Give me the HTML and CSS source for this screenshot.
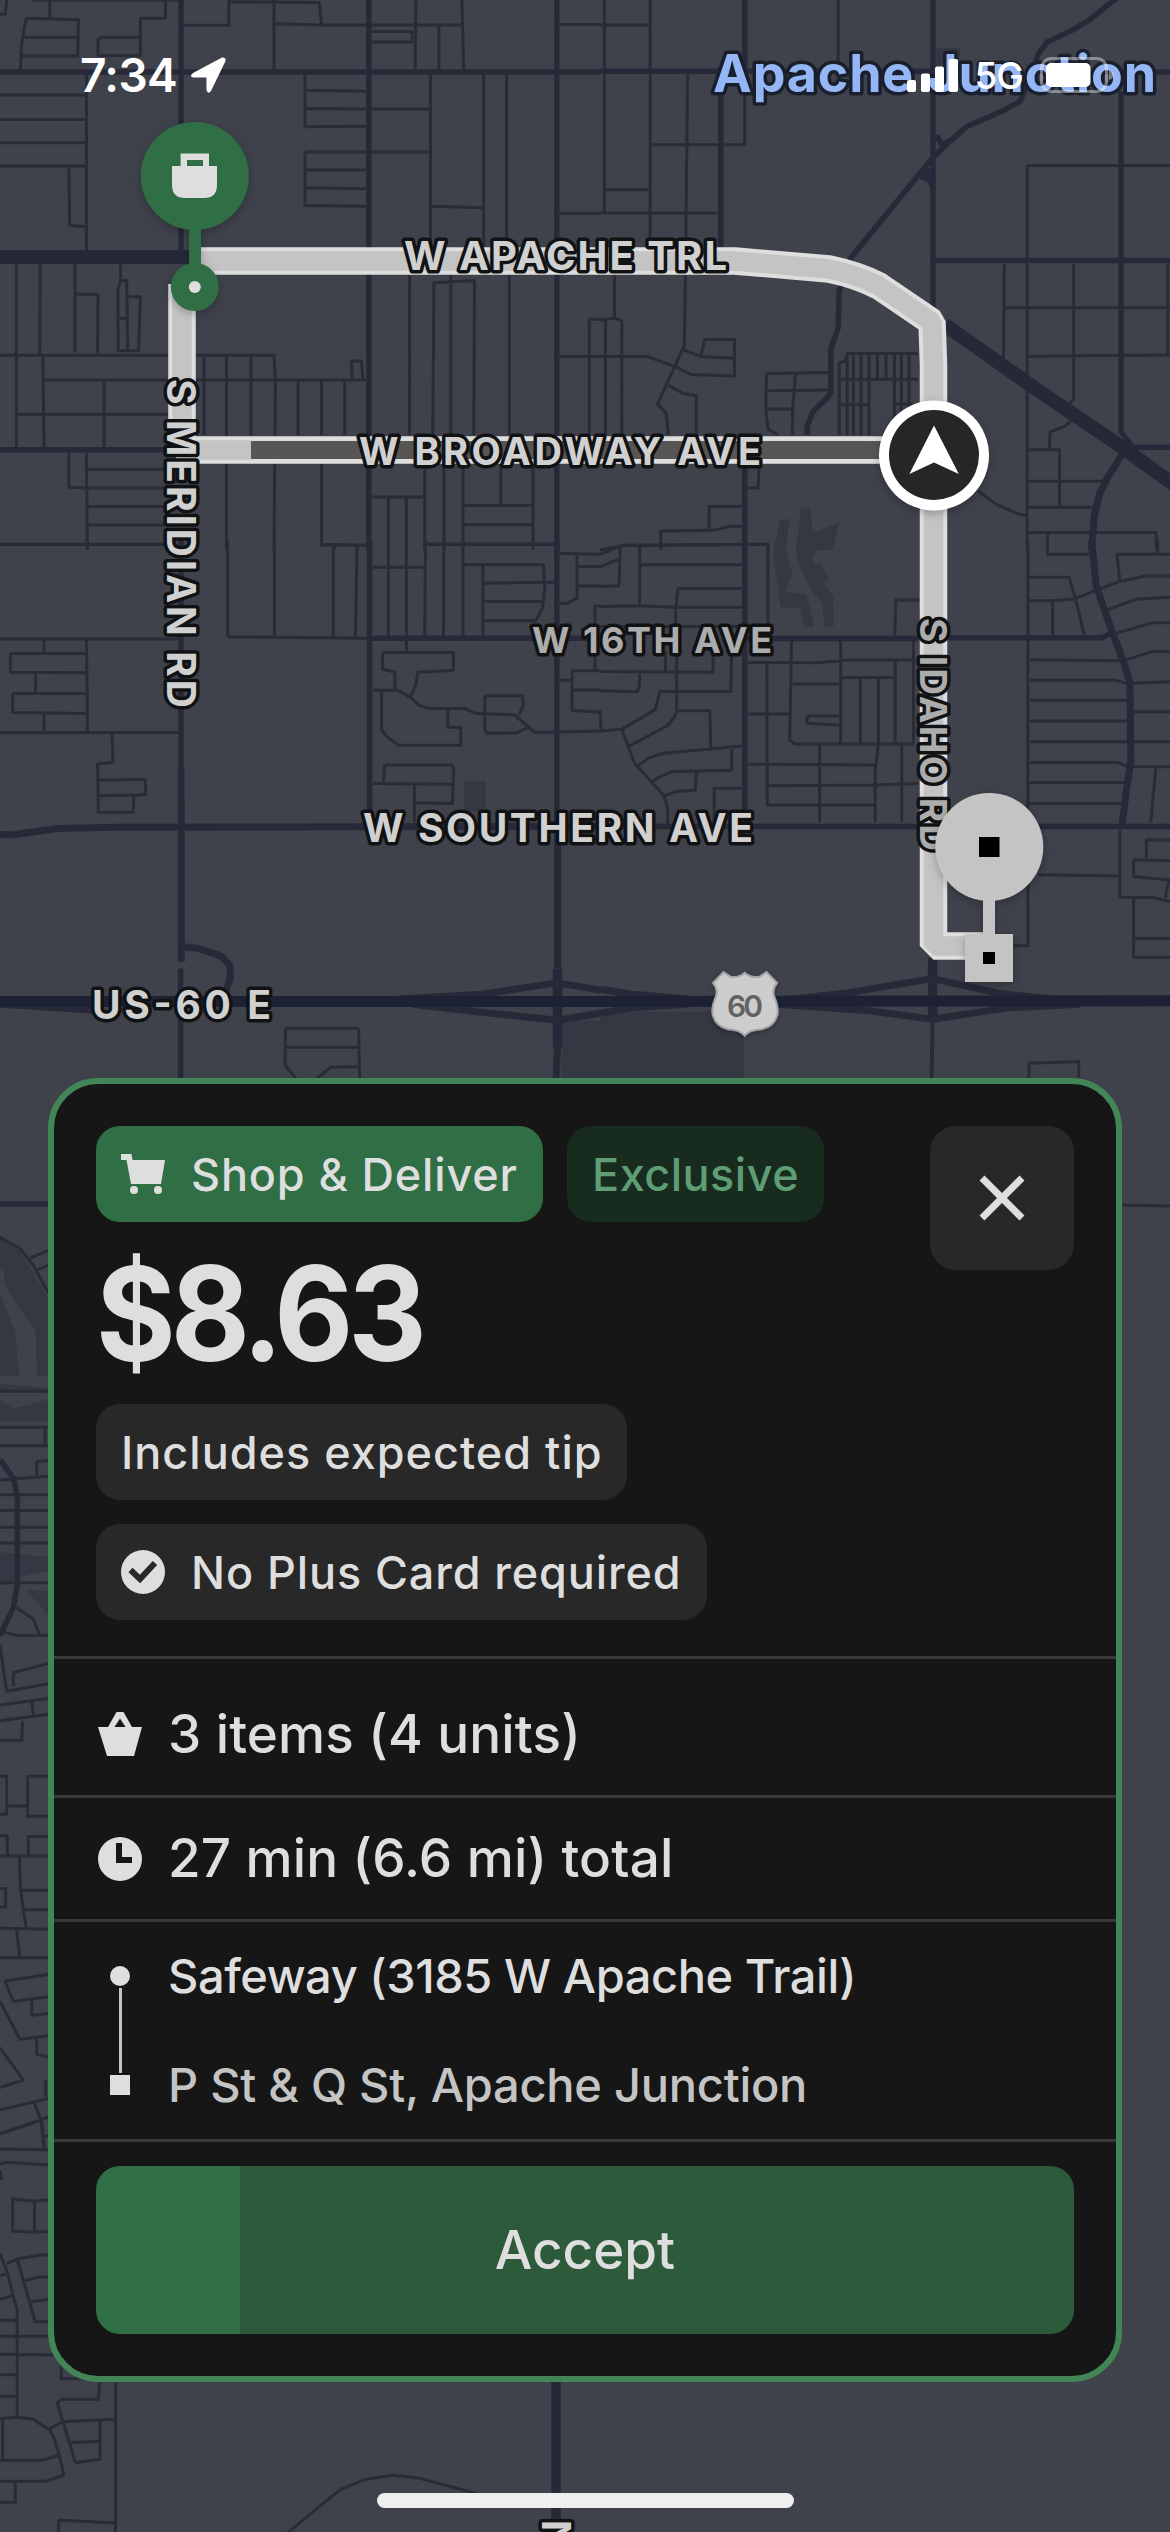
FILE: index.html
```html
<!DOCTYPE html>
<html lang="en">
<head>
<meta charset="utf-8">
<title>Delivery offer</title>
<link rel="stylesheet" href="styles.css">
</head>
<body>
<div class="screen">
<svg class="map" viewBox="0 0 1170 2532" aria-hidden="true">
  <!-- north west -->
  <g transform="scale(.38265 .35077)">
    <path class="minor" d="M0 40H14L18 0M130 0V50M85 0H470M68 52L205 56L203 160H58M68 52L56 130L53 200M65 106H205M480 72H598V0M598 5L835 7L840 68M433 0L432 52H367V158H256V112L265 106H367M716 0V200M720 68L840 71H1207M1087 0L1085 200M972 90H1077V120H972M1147 70V200M1207 0L1212 200M1463 70H1568M0 271H226M0 341H226M0 407H226M0 473H226M226 213V712M180 475L182 643L222 646M797 213V361L957 360M797 257L957 260M797 309L957 311H1125M797 433H1125M797 433V586L957 588M797 485H957M797 535L957 538M1125 213V705M1125 588L1262 592M1264 213V705M1324 213V705M1463 608H1568M43 752V1275M105 752L104 1008M196 752V1006M198 839H256L255 1006M315 752V800L308 828L309 1000H362L367 846H336M315 800H331L334 1000M311 907H330M0 1013H716L720 1085M112 1013L115 1275M115 1083H957M46 1181H440M272 1085V1275M533 1015V1240M592 1015V1568M656 1015V1240M720 1085L716 1568M779 1088V1240M840 1085V1240M901 1088V1240M921 1080L918 1029H945L948 1080M1070 785V1240M1131 1240L1134 806L1240 800L1238 1240M1178 785V1240M1331 785V1240M1463 1016H1568M1568 910H1540V1240M180 1290V1389L226 1391M226 1290L228 1568M230 1338H440M230 1391H440M230 1444H440M230 1497H440M0 1552H440M840 1322V1552L957 1555M874 1555V1568M934 1555V1568M972 1417H1110M1110 1322V1568M1015 1420V1568M1062 1420V1568M1160 1322V1568M1210 1322V1550M1212 1441H1393M1309 1322V1441M1393 1322V1568M1212 1496H1393M1118 1552H1450"/>
    <path class="mid" d="M473 0V715M964 0V1568M1455 0V1568M0 205H1568M0 1282H440"/>
    <path class="major" d="M0 733H500"/>
  </g>
  <!-- north east -->
  <g transform="translate(600) scale(.36352 .35077)">
    <path class="area" d="M925 137H990V200H925ZM495 1480H522L510 1568H480ZM553 1450H578L587 1518L657 1490L640 1568H540Z"/>
    <path class="minor" d="M12 0V605M0 71H138M138 0V705M0 607H322M15 541H138M138 413H398V212M241 212L236 705M655 0V200M1175 472H1568M1175 472V1568M1112 752L1110 1020M1303 752V1137L1285 1160M1110 877H1568M1177 1016L1300 1014L1568 1012M1562 752V1012M1300 1195L1280 1215L1238 1232L1236 1278M1178 1282H1264V1446M1178 1372H1385M1178 1446H1360M1040 1400L1090 1438L1150 1465L1175 1470M1178 1518H1530V1568M1231 1520V1568M40 785V907L60 915V1240M0 912L40 907M15 912V1240M0 1016H130L208 1046L252 1068L370 1072V968H288L277 1016L370 1021M235 785L232 985L158 1152L182 1177L188 1240M228 997L277 1016M188 1098L228 1121L265 1128V1240M458 1065L630 1062M458 1065L456 1170L463 1225L490 1240M460 1114L630 1112M538 1065L530 1165L529 1240M458 1166H530M658 1240V1034L675 1029L680 1008H875M680 1008V1240M697 1008V1240M718 1008V1240M740 1008V1240M763 1008V1080M787 1008V1080M810 1008V1240M829 1008V1200M850 1008V1200M658 1081H875M658 1154H740M812 1152H860M438 1322L435 1391H407M390 1444H300V1508M167 1568V1514L310 1512L360 1500H390M0 1568L65 1555L462 1552V1568M109 1556V1568"/>
    <path class="mid" d="M398 0V200M0 203H910M332 212V705M916 0V880M1433 260V1230L1465 1275H1568M916 743H1568M398 1322V1568M1350 205H1568"/>
    <path class="mid" d="M1420 -5L1345 58L1295 88L1230 120L1205 155L1185 215L1155 290L1100 320L1010 360L960 405L915 450L820 570L690 735L658 830L655 935L635 995V1120L622 1137L585 1175L570 1215V1240M925 385L940 412L965 400M900 480V500L885 505L905 512L914 530"/>
    <path class="major" d="M948 925L1180 1095L1450 1285L1590 1390"/>
    <path class="wide" d="M1440 1290L1400 1355L1375 1405L1360 1470L1352 1568"/>
  </g>
  <!-- south west -->
  <g transform="translate(0 540) scale(.38265 .35714)">
    <path class="area" d="M1213 675H1270V760H1213ZM1468 1345H1568V1520H1468Z"/>
    <path class="minor" d="M0 12H430M228 0V12M595 0V271M717 0V271M595 271L960 275M840 0V14H957M871 15V270M933 15L929 270M1015 0V270M1062 0V310M1112 0L1110 270M1160 0L1159 270M1210 0V270M975 76H1110M1112 11H1450M1393 0V11M1213 69H1420L1424 130L1418 190L1400 226H1262M1262 70V270M1265 121L1450 118M1265 172H1420M1463 38L1568 40M1508 38V162L1480 178H1463M1510 74H1568M1510 129H1568M1568 185H1555V370M0 277H470M27 318H225M27 318V370L225 372M115 280V316M226 280L229 540M93 372V428M33 430H225M33 430V483L225 486M115 486V540M0 540L470 539M293 541L295 622L255 627L257 762H348L350 716L381 712L379 670L257 673M257 716L350 714M1000 315H1185V365L1092 370L1087 405L1072 440M1000 315V362L1032 370V420M975 421H1040L1072 440L1095 463L1125 472H1215L1245 486L1345 490L1398 539L1568 535M997 421V530L1010 550L1042 575H1204V524H1170V472M1268 436H1365L1368 460L1357 490M1267 436V530L1272 541L1350 540L1382 524M1005 630H1180L1186 640L1182 738L1085 736M1005 630L1002 682M975 682L1185 684M1083 684V790M1463 393H1495M1568 366H1495V477L1568 482M1497 420H1568M746 1367H937M746 1367L745 1470L775 1510M937 1367L940 1510M746 1420H937M825 1510L865 1476L937 1474"/>
    <path class="mid" d="M473 0V790M966 0V790M1455 0V780M960 275H1568M472 1200V1510"/>
    <path class="wide" d="M0 824L30 826L150 808L300 804L1568 802M473 640L474 1180M1457 780V1120M475 1138L520 1144L578 1165L600 1190L603 1222L590 1265"/>
    <path class="major thin" d="M1457 1200V1420"/>
    <path class="wide" d="M1457 1110V1200M1457 1420L1453 1510M1040 1285L1260 1272L1455 1240L1568 1260M1080 1300L1240 1320L1455 1345L1568 1325M0 1300L240 1316"/>
    <path class="highway" d="M0 1292H1568"/>
  </g>
  <!-- south east -->
  <g transform="translate(600 540) scale(.36352 .35714)">
    <path class="area" d="M480 0H515L512 30L530 95L510 145L568 155L590 243H562L550 190L497 188L478 60ZM540 0H645L640 18H605L583 55L592 72L607 65L630 108L615 122L642 158V243H617L612 180L575 130L550 80L540 40ZM0 1320H310L396 1380V1520H0Z"/>
    <path class="minor" d="M0 40L60 15L462 12V240M0 75L55 52L52 128L0 130M55 15V55M167 0V12M109 15V183M112 69H390M390 136H215L208 190V270M0 186L110 184L200 188H390M0 242H390M0 368L310 370L312 310M180 310V368M211 310V480L205 495L185 520L80 577M109 370V405L103 425L0 422M362 310L360 424H165L152 475L60 530L0 535M0 475L3 535M60 530L95 625L175 715L186 750V795M215 478H302L305 590M100 635L135 610L175 597L390 577M362 582V645L200 648L160 665L143 677M265 650L262 700L205 705L175 717M390 695H314V790M407 343L600 344L680 336H860M527 282L522 560L535 571H862M530 403H662M662 282V570M665 385H812M812 338V570M716 388V570M766 388V570L757 650V790M570 493H662M570 493V513L662 519M407 487H520M459 345L460 742H757M407 628L757 630M604 575V790M460 688L757 686L875 682M830 573V790M862 282V570M811 268L814 168H878M1177 0V790M1231 0V40H1345M1180 104H1290L1308 165L1332 265M1180 170H1245V265M1245 170L1305 165L1380 135L1430 116L1500 101H1568M1430 116L1422 40H1568M1534 0V36M1395 195L1480 165L1568 160M1415 262L1520 232H1568M1450 335L1520 312H1568M1182 335L1435 338M1182 393H1420L1450 402L1568 397M1182 449H1450M1470 481H1568M1182 507H1450M1182 565H1568M1182 623H1425L1450 634L1568 635M1529 638L1515 790M1182 679H1450M1182 738H1440M1205 937L1430 941M1177 960V1136H1138M1430 812V1000L1520 1001L1568 1012M1568 840H1503V890M1468 895L1568 898M1468 895V942L1568 952M1565 955L1555 1001M1468 1003V1168H1568M1470 1116H1568M1180 1505V1465L1317 1460V1505"/>
    <path class="mid" d="M398 0V755M400 276H875M955 274H1380L1410 260M0 802H1568"/>
    <path class="wide" d="M1352 0L1365 130L1410 260L1440 340L1458 400L1460 620L1448 700L1436 800"/>
    <path class="major thin" d="M915 1170V1345"/>
    <path class="minor edge" d="M915 1340L912 1510"/>
    <path class="wide" d="M0 1258L90 1272L240 1285M0 1325L90 1310L240 1300M490 1290L680 1268L915 1228L1100 1270L1240 1285M490 1300L740 1318L915 1342L1120 1310L1320 1300"/>
    <path class="highway" d="M0 1292L1568 1290"/>
  </g>
  <!-- west edge beside the card -->
  <g transform="translate(0 1080) scale(.33333 .92602)">
    <path class="area" d="M0 170L60 185L145 235V320H112L106 270L90 262L45 240L15 220L10 205L0 203ZM0 230L45 272L58 320H0ZM0 328L145 333V368H0V345L40 355L145 345V337H0ZM0 510L145 515V530L80 535L20 545H0ZM75 550L145 552V578Z"/>
    <path class="minor" d="M0 170L60 182L100 200L145 230M80 194L145 184M105 206L145 200M0 336H145M0 375H145M110 430V412L145 411M0 395H145M135 375V395M0 432L145 428M0 448H145M0 465H145M0 483H145M0 500H145M0 543H145M0 595L50 600H145M50 570L100 582L120 600M0 610L20 660L145 652M40 655V640L145 630M0 675L145 668M0 692L145 685M95 672L100 685M68 692L65 713H0M0 752H20V793H0M25 784H85M145 752H83V795H145M0 816H22V838H145M145 817H85V838M0 838H58L62 875L78 915M62 875H145M70 896H145M0 873H17V893H0M0 916L145 917M50 918L60 948M0 948H145M15 973L145 966M15 973L40 995L145 990M95 992V1010L145 1008M0 995L60 1036L145 1032M0 1045L70 1080L0 1088M110 1035V1052L145 1055M0 1112L145 1100M100 1102L125 1125L132 1150M0 1138L145 1120M137 1080V1098"/>
    <path class="mid" d="M0 134H145M0 410L40 430L52 450V545L40 570L0 600"/>
  </g>
  <!-- bottom -->
  <g transform="translate(0 2120) scale(.38265 .33333)">
    <path class="minor" d="M0 40L45 25L108 0L115 85M115 48H130M0 87L130 89M0 132L15 127L130 135M0 150L5 180M130 239L90 244L33 237V333L90 337L130 334M90 244V335M0 400L20 460L35 530L45 570V888M18 430L45 417L110 404L130 405M45 417L92 605H130M62 482L100 472L130 470M78 545L130 538M0 467L20 460M0 538L35 526M0 601H45M0 649H130M0 703L140 705M0 764H43M0 829H43M160 730V776H235M261 785L257 838H160L150 850L197 1028L261 1018V903M130 926L165 905L300 898M182 968L261 964M0 896L45 892L85 897L130 930L140 950L155 1005L167 1065L120 1084H0M7 896V1020M0 1021H110L155 1005M40 1086V1147H0M302 785V1236M152 1236L154 1200L300 1209M750 1240L850 1145L890 1108L955 1078L1025 1066L1090 1073L1250 1122"/>
    <path class="major thin" d="M1453 785V1200"/>
  </g>
  <path class="minor" d="M1120 1205L1170 1206"/>

  <!-- route -->
  <path class="route-edge" d="M182 284V450H900M196 261H735L829 269Q858 275 879 286L932 322L933.500 365V946H985"/>
  <path class="route" d="M182 284V450H251M196 261H735L829 269Q858 275 879 286L932 322L933.500 365V946H985"/>
  <path class="route-done" d="M251 450H900"/>

  <!-- labels -->
  <g class="label">
    <text x="404" y="270" font-size="40" textLength="323">W APACHE TRL</text>
    <text x="359" y="465" font-size="38" textLength="402">W BROADWAY AVE</text>
    <text x="532" y="653" font-size="36" textLength="240" class="dim">W 16TH AVE</text>
    <text x="363" y="842" font-size="39" textLength="390">W SOUTHERN AVE</text>
    <text x="92" y="1019" font-size="39" textLength="179">US-60 E</text>
    <text transform="translate(167 379) rotate(90)" font-size="39" textLength="329">S MERIDIAN RD</text>
    <text transform="translate(920 618) rotate(90)" font-size="37" textLength="233" class="dim">S IDAHO RD</text>
    <text transform="translate(542 2520) rotate(90)" font-size="39">N</text>
  </g>
  <text class="city" x="713" y="92" font-size="52" textLength="443">Apache Junction</text>

  <!-- highway shield -->
  <g transform="translate(600 540) scale(.36352 .35714)">
    <path class="shield" d="M340 1210L358 1222Q380 1228 398 1212Q416 1228 440 1222L458 1210L487 1240Q470 1262 482 1285Q492 1310 488 1330Q480 1362 445 1370Q410 1372 398 1388Q386 1372 352 1370Q318 1362 310 1330Q306 1310 316 1285Q328 1262 311 1240Z"/>
  </g>
  <text class="shield-text" x="745" y="1017" font-size="30" text-anchor="middle" textLength="36">60</text>

  <!-- pick-up pin -->
  <g class="pin">
    <path class="green" d="M189 225H201V270H189Z"/>
    <circle class="green" cx="194.800" cy="176" r="54"/>
    <circle class="green" cx="194.800" cy="287" r="24"/>
  </g>
  <circle class="light" cx="194.800" cy="287" r="6"/>
  <path class="light" fill-rule="evenodd" d="M180.600 153.600H209V166H217V185Q217 198 204 198H185Q172 198 172 185V166H180.600ZM187 160V166H203V160Z"/>

  <!-- drop-off pin -->
  <g class="pin">
    <path class="gray" d="M983 890H995V940H983Z"/>
    <circle class="gray" cx="989.300" cy="847" r="54"/>
    <path class="gray" d="M965 934H1013V982H965Z"/>
  </g>
  <path d="M979 837H999.500V857H979ZM983 952H995V964H983Z"/>

  <!-- driver position -->
  <circle class="white pin" cx="934" cy="455.500" r="55"/>
  <circle fill="#262626" cx="934" cy="455" r="45"/>
  <path class="white" d="M934 425.500L958.800 474L934 462.500L909.400 474Z"/>
</svg>

<header class="status">
  <span class="time">7:34</span>
  <svg class="loc" viewBox="0 0 36 36"><path d="M3 16Q-1 19 3 20.500H16.500V33Q18 38 21 34L35.500 4Q36 0 32 .5Z"/></svg>
  <svg class="bars" viewBox="0 0 51 33"><rect y="21" width="9" height="12" rx="2"/><rect x="14" y="14.500" width="9" height="18.500" rx="2"/><rect x="28" y="7.500" width="9" height="25.500" rx="2"/><rect x="41.500" width="9.500" height="33" rx="2"/></svg>
  <span class="net">5G</span>
  <svg class="battery" viewBox="0 0 76 38"><rect class="shell" x="2.500" y="2.500" width="65" height="33" rx="10"/><rect x="7" y="7" width="44.500" height="24" rx="5"/><path class="nub" d="M70 14Q75 16 75 19T70 24Z"/></svg>
</header>

<main class="card">
  <section class="summary">
    <div class="top">
      <div class="chips">
        <span class="chip solid"><svg class="icon" viewBox="0 0 44 40"><path d="M0 0H10.500L11.500 6H44L40 30H10L5.500 6H0Z"/><circle cx="13" cy="36" r="4"/><circle cx="37" cy="36" r="4"/></svg>Shop &amp; Deliver</span>
        <span class="chip soft">Exclusive</span>
      </div>
      <div class="price">$8.63</div>
    </div>
    <button class="close" aria-label="Close"><svg viewBox="0 0 46 46"><path d="M3 3L43 43M43 3L3 43"/></svg></button>
    <span class="chip tip">Includes expected tip</span>
    <span class="chip plus"><svg class="icon check" viewBox="0 0 44 44"><circle cx="22" cy="22" r="22"/><path d="M9.500 20L19 29L34 13"/></svg>No Plus Card required</span>
  </section>
  <section class="row items"><svg viewBox="0 0 44 44"><path d="M0 15H10L18.500 0H25.500L34 15H44L36 44H9Z"/><path class="hole" d="M16.500 15L22 6.500L27.500 15Z"/></svg><span>3 items (4 units)</span></section>
  <section class="row total"><svg viewBox="0 0 44 44"><circle cx="22" cy="22" r="22"/><path class="hole" d="M18 6H24V20H34V26H18Z"/></svg><span>27 min (6.6 mi) total</span></section>
  <section class="stops">
    <div class="track"><i class="dot"></i><i class="line"></i><i class="square"></i></div>
    <div class="places"><div class="store">Safeway (3185 W Apache Trail)</div><div class="dest">P St &amp; Q St, Apache Junction</div></div>
  </section>
  <section class="action"><button class="accept">Accept</button></section>
</main>
<div class="home"></div>
</div>
</body>
</html>
```
FILE: styles.css
```css
* { box-sizing: border-box; }
body { margin: 0; background: #3f424b; }
button { border: 0; padding: 0; font: inherit; color: inherit; }
.screen {
  position: relative;
  width: 1170px;
  height: 2532px;
  overflow: hidden;
  font-family: Inter, "Liberation Sans", sans-serif;
  font-weight: 500;
  color: #dedede;
}

/* map */
.map { position: absolute; inset: 0; width: 1170px; height: 2532px; }
.map path { vector-effect: non-scaling-stroke; }
.area { fill: #343842; }
.minor, .mid, .wide, .major, .highway { fill: none; stroke-linejoin: round; }
.minor { stroke: #292b36; stroke-width: 3px; }
.minor.edge { stroke-width: 4px; }
.mid { stroke: #272938; stroke-width: 5.5px; }
.wide { stroke: #272938; stroke-width: 7px; }
.major { stroke: #262838; stroke-width: 14px; }
.major.thin { stroke-width: 9.5px; }
.highway { stroke: #1c2134; stroke-width: 11px; }
.route-edge, .route, .route-done { fill: none; stroke-linejoin: bevel; }
.route-edge { stroke: #dedede; stroke-width: 27.5px; }
.route { stroke: #c4c4c4; stroke-width: 19.5px; }
.route-done { stroke: #575655; stroke-width: 18px; }
.label text, .city {
  font-weight: 700;
  fill: #d0d0d0;
  stroke: #111214;
  stroke-width: 7px;
  stroke-linejoin: round;
  paint-order: stroke;
}
.label .dim { fill: #acacac; }
.map .city { fill: #94b6f4; stroke: #1a1f2e; }
.shield { fill: #cdcdcd; stroke: #a4a4a6; stroke-width: 2px; filter: drop-shadow(0 4px 6px rgba(0,0,0,.3)); }
.shield-text { fill: #626262; font-weight: 600; }
.pin { filter: drop-shadow(0 3px 4px rgba(0,0,0,.25)); }
.green { fill: #306e45; }
.gray { fill: #c4c4c4; }
.light { fill: #dedede; }
.white { fill: #fff; }

/* status bar */
.status {
  position: relative;
  display: flex;
  align-items: center;
  height: 148px;
  padding: 2px 55px 0 80px;
  color: #fff;
  fill: #fff;
}
.time { font-size: 46px; font-weight: 600; letter-spacing: -.6px; }
.loc { width: 36px; height: 36px; margin-left: 13px; }
.bars { width: 51px; height: 33px; margin-left: auto; }
.net { font-size: 37px; letter-spacing: -1px; margin-left: 16px; }
.battery { width: 76px; height: 38px; margin-left: 16px; }
.shell { fill: none; stroke: rgba(255,255,255,.4); stroke-width: 3px; }
.nub { fill: rgba(255,255,255,.4); }

/* offer card */
.card {
  position: relative;
  width: 1074px;
  height: 1304px;
  margin: 930px 0 0 48px;
  border: 6px solid #428556;
  border-radius: 50px;
  background: #161616;
}
.summary {
  display: flex;
  flex-direction: column;
  align-items: flex-start;
  gap: 24px;
  height: 572px;
  padding: 42px 42px 36px;
  position: relative;
}
.top { height: 254px; }
.chips { display: flex; gap: 24px; }
.chip {
  display: inline-flex;
  align-items: center;
  flex-shrink: 0;
  height: 96px;
  padding: 0 25px;
  border-radius: 24px;
  background: #282828;
  font-size: 45px;
  white-space: nowrap;
}
.solid { width: 447px; background: #306e45; letter-spacing: .85px; }
.soft { width: 257px; background: #172c1e; color: #5f9d74; letter-spacing: .5px; }
.tip { width: 531px; letter-spacing: 1px; }
.plus { width: 611px; letter-spacing: .9px; }
.icon { width: 44px; height: 40px; margin-right: 26px; fill: #dedede; }
.check { height: 44px; }
.check path { fill: none; stroke: #282828; stroke-width: 6px; }
.price {
  margin-top: 13px;
  font-size: 131px;
  line-height: 158px;
  font-weight: 700;
  letter-spacing: -5.5px;
  transform: scaleX(.93);
  transform-origin: left;
}
.close {
  position: absolute;
  top: 42px;
  right: 42px;
  width: 144px;
  height: 144px;
  display: grid;
  place-items: center;
  border-radius: 26px;
  background: #282828;
}
.close svg { width: 46px; height: 46px; stroke: #dedede; stroke-width: 7px; }
.row {
  display: flex;
  align-items: center;
  border-top: 3px solid #383838;
  padding-left: 44px;
  font-size: 53px;
  letter-spacing: .15px;
  white-space: nowrap;
}
.row svg { width: 44px; height: 44px; margin-right: 26px; fill: #dedede; }
.row .hole { fill: #161616; }
.items { height: 139px; padding-top: 14px; }
.total { height: 124px; }
.total span { margin-top: -2px; }
.stops {
  display: flex;
  height: 220px;
  border-top: 3px solid #383838;
  padding: 44px 0 0 56px;
}
.track { width: 20px; display: flex; flex-direction: column; align-items: center; gap: 2px; }
.track i { display: block; background: #dedede; }
.dot { width: 20px; height: 20px; border-radius: 50%; }
.line { width: 3px; height: 85px; }
.track .line { background: #c4c4c4; }
.square { width: 20px; height: 20px; }
.places {
  display: flex;
  flex-direction: column;
  gap: 49px;
  margin: -20px 0 0 38px;
  font-size: 47px;
  line-height: 60px;
  white-space: nowrap;
}
.store { letter-spacing: -.45px; }
.dest { color: #c4c4c4; letter-spacing: -.26px; }
.action { border-top: 3px solid #383838; padding: 24px 42px 0; }
.accept {
  width: 978px;
  height: 168px;
  border-radius: 24px;
  font-size: 53px;
  background: linear-gradient(90deg, #306e45 144px, #2d5a3b 144px);
}
.home {
  position: relative;
  width: 417px;
  height: 15px;
  margin: 111px 0 0 377px;
  border-radius: 8px;
  background: #efefef;
}
```
